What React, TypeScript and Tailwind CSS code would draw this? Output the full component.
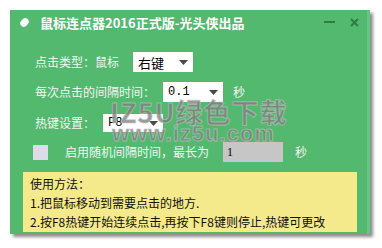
import React from 'react';

const cjk = { fontFamily: '"Noto Sans CJK SC", "Noto Sans", sans-serif' };

function Arrow() {
  return (
    <svg width="9" height="5" viewBox="0 0 9 5" className="shrink-0">
      <path d="M0 0 H9 L4.5 5 Z" fill="#4a4a4a" />
    </svg>
  );
}

function Select({ value, width, height, mono }: { value: string; width: string; height: string; mono?: boolean }) {
  return (
    <div className={`${width} ${height} bg-white flex items-center justify-between pl-[5px] pr-[5px]`}>
      <span
        className="text-[13px] text-black leading-none"
        style={mono ? { fontFamily: '"Liberation Mono", monospace', fontSize: 12 } : undefined}
      >
        {value}
      </span>
      <Arrow />
    </div>
  );
}

export default function App() {
  return (
    <div className="w-[382px] h-[248px] bg-white pl-[10px] pt-[10px] overflow-hidden" style={cjk}>
      <div className="relative w-[360px] h-[224px] bg-[#52b96f] flex flex-col shadow-[3px_3px_3px_rgba(0,0,0,0.45)] border-r-[3px] border-[#66c581]">
        {/* 标题栏 */}
        <div className="h-[24px] flex items-center pl-[10px] pr-[8px]">
          <div className="w-[9px] h-[7px] bg-white rounded-full -rotate-45 mt-[1px]" />
          <span className="ml-[11px] text-white font-bold text-[13px] leading-none">
            鼠标连点器2016正式版-光头侠出品
          </span>
          <div className="ml-auto flex items-center gap-[15px]">
            <div className="w-[11px] h-[2px] bg-[#2e7d45]" />
            <svg width="9" height="9" viewBox="0 0 9 9">
              <path d="M1 1 L8 8 M8 1 L1 8" stroke="#2e7d45" strokeWidth="2" />
            </svg>
          </div>
        </div>

        {/* 点击类型 */}
        <div className="mt-[18px] h-[20px] flex items-center pl-[25px] text-[12px] text-[#f4f4f4]">
          <span className="w-[98px]">点击类型：鼠标</span>
          <Select value="右键" width="w-[60px]" height="h-[20px]" />
        </div>

        {/* 间隔时间 */}
        <div className="mt-[10px] h-[20px] flex items-center pl-[25px] text-[12px] text-[#f4f4f4]">
          <span className="w-[128px]">每次点击的间隔时间：</span>
          <Select value="0.1" width="w-[60px]" height="h-[20px]" mono />
          <span className="ml-[10px]">秒</span>
        </div>

        {/* 热键 */}
        <div className="mt-[12px] h-[18px] flex items-center pl-[25px] text-[12px] text-[#f4f4f4]">
          <span className="w-[68px]">热键设置：</span>
          <Select value="F8" width="w-[60px]" height="h-[18px]" mono />
        </div>

        {/* 随机间隔 */}
        <div className="mt-[10px] h-[20px] flex items-center pl-[23px] text-[12px] text-[#f4f4f4]">
          <div className="w-[15px] h-[15px] bg-[#dcdbe9]" />
          <span className="ml-[17px] w-[158px]">启用随机间隔时间，最长为</span>
          <div className="w-[60px] h-[20px] bg-[#c6c6c6] flex items-center pl-[4px]">
            <span className="text-black text-[12px]" style={{ fontFamily: '"Liberation Serif", serif' }}>1</span>
          </div>
          <span className="ml-[12px]">秒</span>
        </div>

        {/* 使用方法 */}
        <div className="mt-[10px] ml-[13px] w-[334px] h-[60px] bg-[#f4e98b] pl-[7px] pt-[2px] text-[12px] leading-[19px] text-[#111]">
          <div>使用方法：</div>
          <div>1.把鼠标移动到需要点击的地方.</div>
          <div className="whitespace-nowrap">2.按F8热键开始连续点击,再按下F8键则停止,热键可更改</div>
        </div>

        {/* 水印 */}
        <div className="absolute left-[100px] top-[88px] flex flex-col items-start pointer-events-none text-[#7f7f7f]/80">
          <span className="text-[27px] font-bold leading-none tracking-[1px]" style={{ WebkitTextStroke: '1px rgba(200,200,200,0.6)' }}>
            IZ5U绿色下载
          </span>
          <span
            className="text-[22px] font-bold leading-none -mt-[2px] ml-[2px] tracking-[1px]"
            style={{ fontFamily: '"Liberation Sans", sans-serif', WebkitTextStroke: '1px rgba(200,200,200,0.6)' }}
          >
            www.iz5u.com
          </span>
        </div>
      </div>
    </div>
  );
}
